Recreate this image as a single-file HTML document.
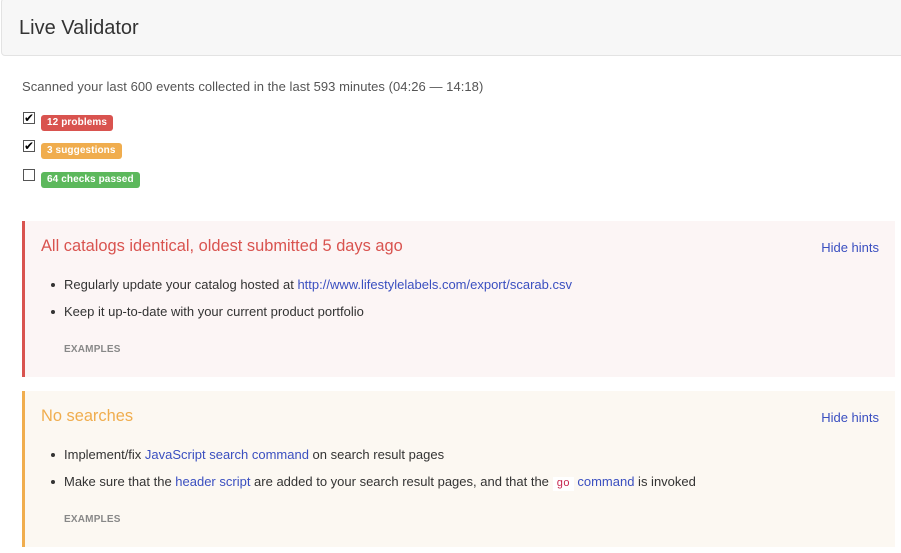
<!DOCTYPE html>
<html><head><style>
body{margin:0;width:901px;height:553px;overflow:hidden;background:#fff;font-family:"Liberation Sans",sans-serif;color:#333;font-size:13px;position:relative}
.hdr{position:absolute;left:1px;top:-2px;width:905px;height:58px;background:#f7f7f7;border:1px solid #e3e3e3;border-radius:4px;box-sizing:border-box}
.hdr h1{margin:0;position:absolute;left:17px;top:18px;font-size:20px;font-weight:normal;color:#333}
.t{position:absolute;left:22px;top:79px;font-size:13px;color:#555;letter-spacing:.05px}
.cb{position:absolute;left:23px;width:12px;height:12px;border:1px solid #555;box-sizing:border-box;background:#fff;font-size:12px;line-height:10px;text-align:center;color:#000}
.lb{position:absolute;left:41px;height:16px;line-height:16px;padding:0 6px;border-radius:3px;color:#fff;font-size:10px;font-weight:bold;letter-spacing:.1px}
.p{position:absolute;left:22px;width:873px;height:156px;box-sizing:border-box;border-left:3px solid}
.p h2{position:absolute;left:16px;top:16px;margin:0;font-size:16.4px;font-weight:normal}
.p .hh{position:absolute;right:16px;top:19px;color:#3a4fc0;font-size:13px}
.p ul{position:absolute;left:25px;top:56px;margin:0;padding:0;list-style:none}
.p li{position:relative;padding-left:14px;height:27px;font-size:13px;color:#333}
.p li:before{content:"";position:absolute;left:1px;top:6px;width:4px;height:4px;border-radius:50%;background:#333}
.p a{color:#3a4fc0}
.ex{position:absolute;left:39px;top:123px;font-size:10px;font-weight:bold;color:#888;letter-spacing:.2px}
code{font-family:"Liberation Mono",monospace;color:#c7254e;background:#fff;padding:1px 4px;font-size:11px}
</style></head><body>
<div class="hdr"><h1>Live Validator</h1></div>
<div class="t">Scanned your last 600 events collected in the last 593 minutes (04:26 — 14:18)</div>
<div class="cb" style="top:112px">✔</div><div class="lb" style="top:115px;background:#d9534f">12 problems</div>
<div class="cb" style="top:140px">✔</div><div class="lb" style="top:143px;background:#f0ad4e">3 suggestions</div>
<div class="cb" style="top:169px"></div><div class="lb" style="top:172px;background:#5cb85c">64 checks passed</div>
<div class="p" style="top:221px;background:#fcf5f5;border-color:#d9534f">
<h2 style="color:#d9534f">All catalogs identical, oldest submitted 5 days ago</h2><span class="hh">Hide hints</span>
<ul><li>Regularly update your catalog hosted at <a>http://www.lifestylelabels.com/export/scarab.csv</a></li><li>Keep it up-to-date with your current product portfolio</li></ul>
<div class="ex">EXAMPLES</div></div>
<div class="p" style="top:391px;background:#fcf8f2;border-color:#f0ad4e">
<h2 style="color:#f0ad4e">No searches</h2><span class="hh">Hide hints</span>
<ul><li>Implement/fix <a>JavaScript search command</a> on search result pages</li><li>Make sure that the <a>header script</a> are added to your search result pages, and that the <code>go</code> <a>command</a> is invoked</li></ul>
<div class="ex">EXAMPLES</div></div>
</body></html>
